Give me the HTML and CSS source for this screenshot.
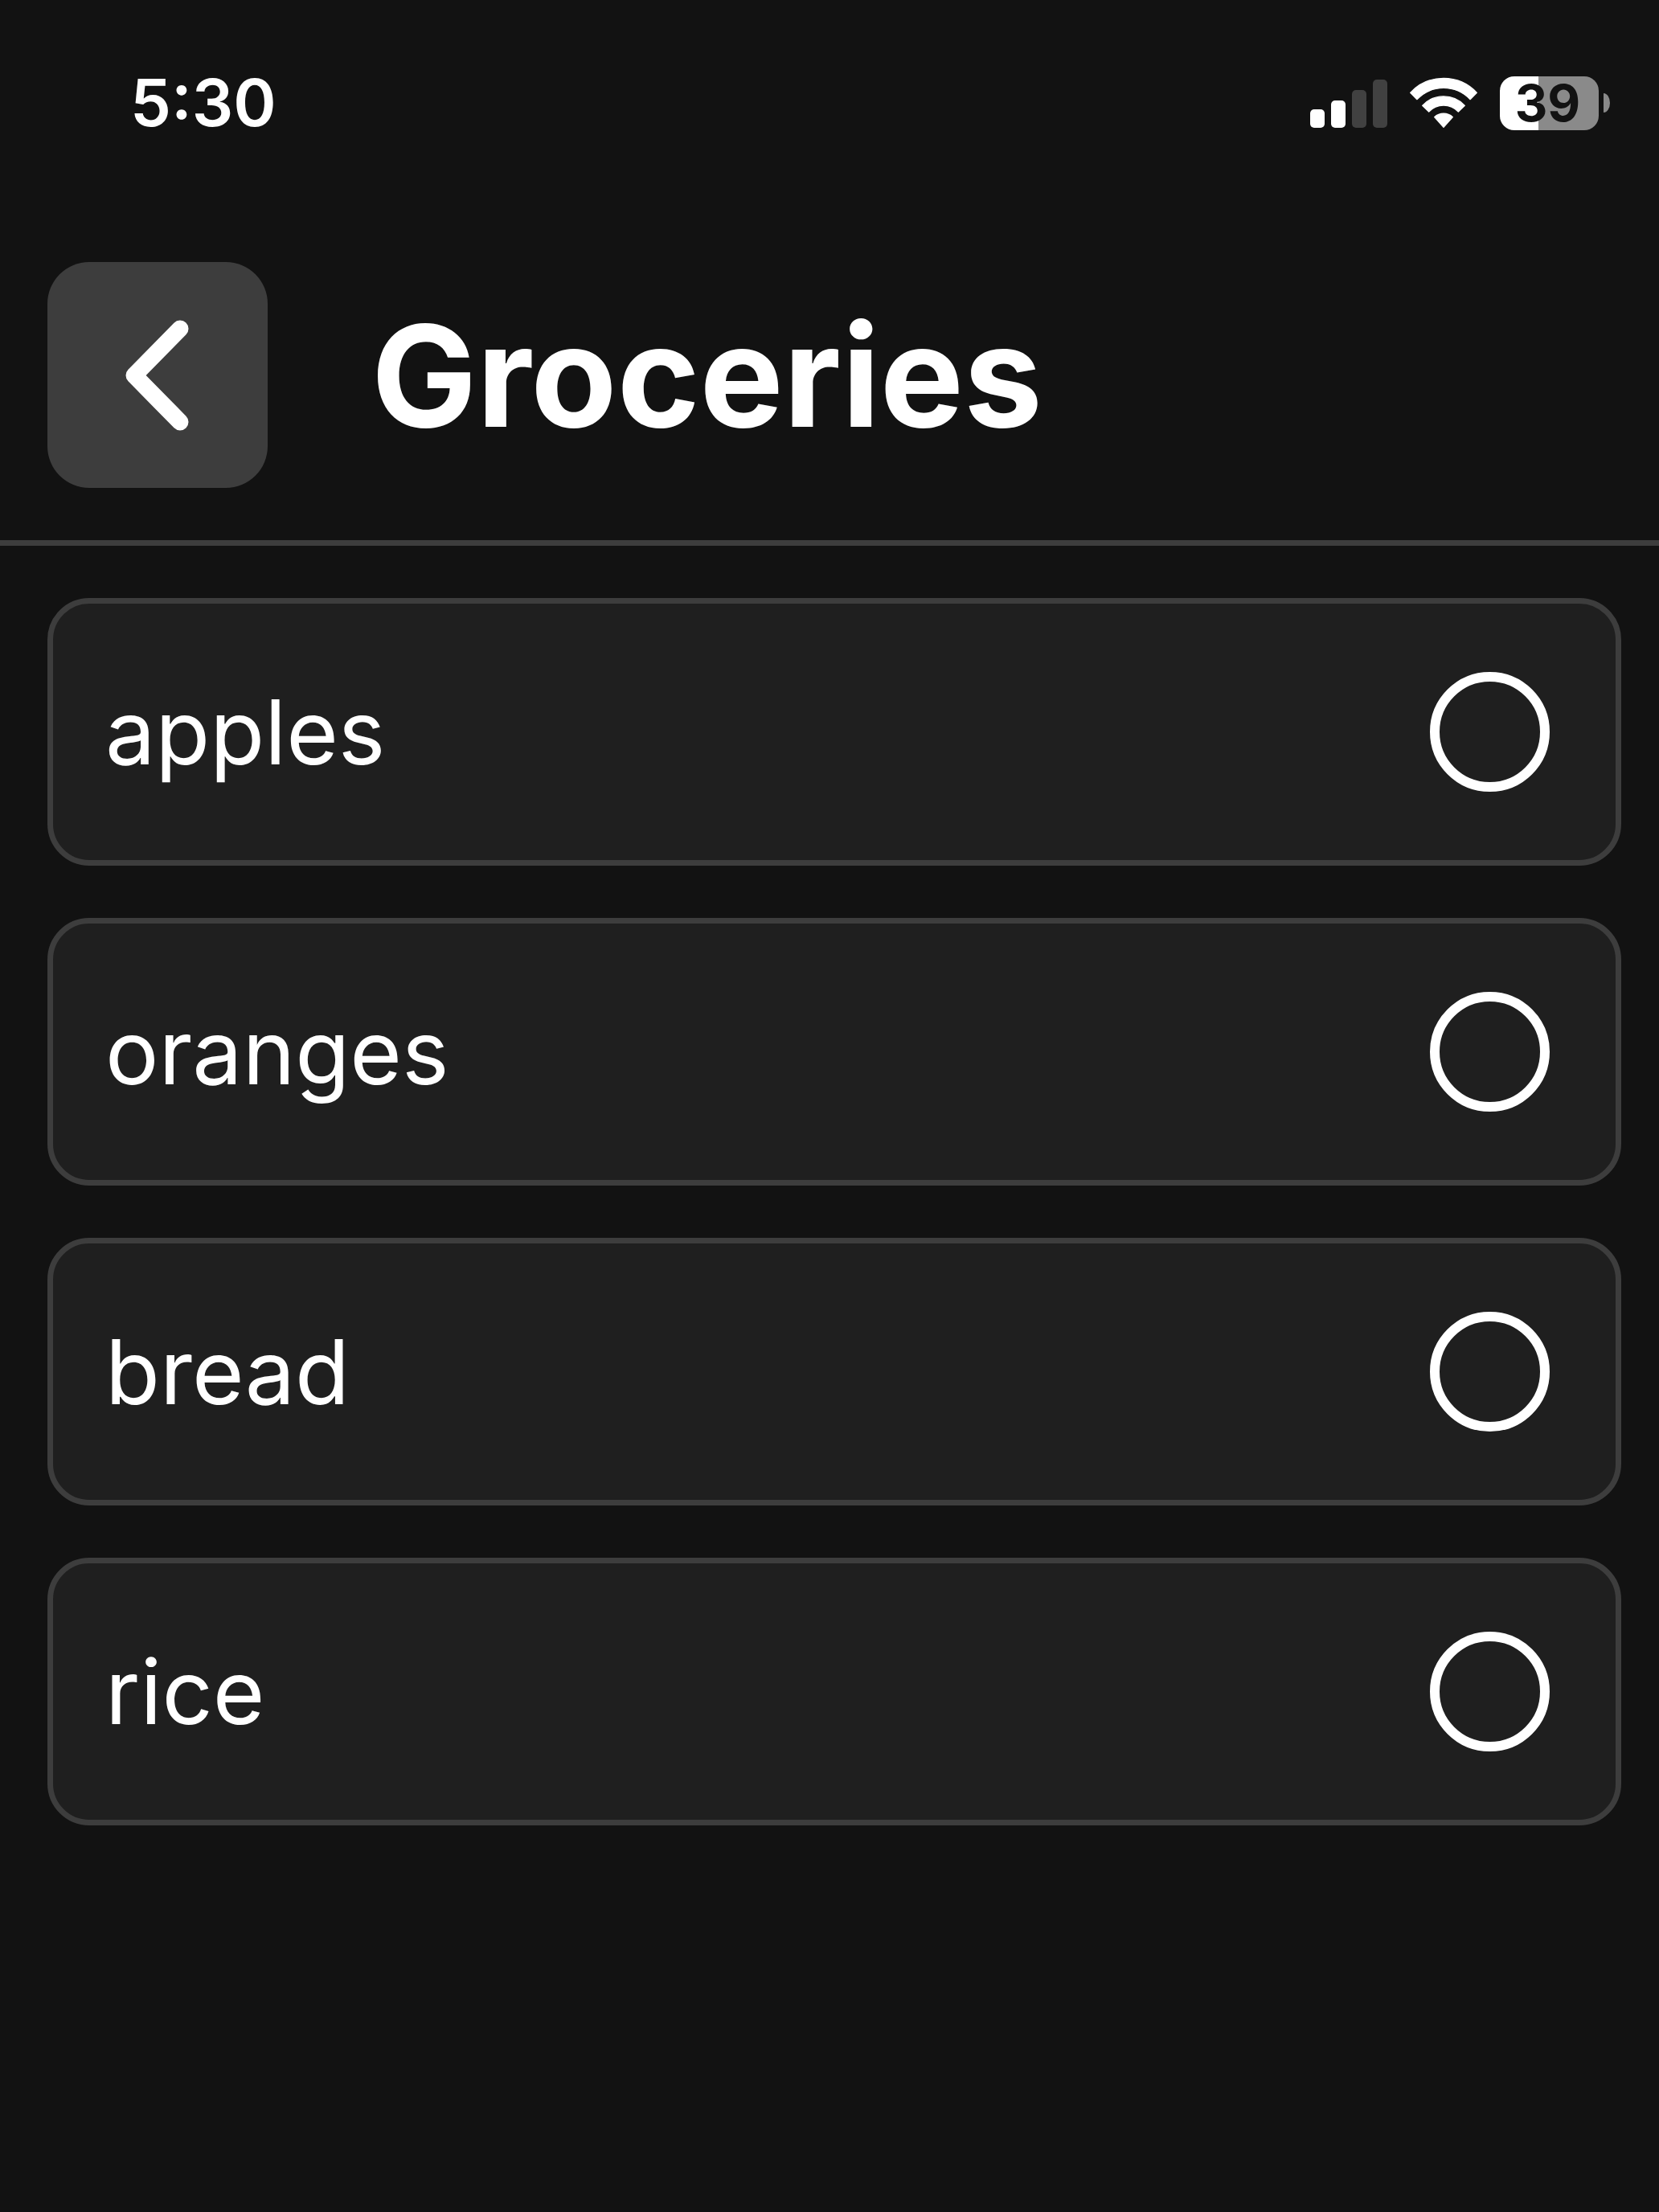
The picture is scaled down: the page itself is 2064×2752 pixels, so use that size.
FILE: index.html
```html
<!DOCTYPE html>
<html lang="en">
<head>
<meta charset="utf-8">
<meta name="viewport" content="width=device-width, initial-scale=1">
<title>Groceries</title>
<link rel="stylesheet" href="styles.css">
</head>
<body>
<div class="status-bar">
  <time class="clock">5:30</time>
  <div class="indicators">
    <svg class="signal" viewBox="0 0 96 62" aria-hidden="true">
      <rect x="0" y="39" width="18" height="23" rx="5"/>
      <rect x="26" y="28" width="18" height="34" rx="5"/>
      <rect class="dim" x="52" y="15" width="18" height="47" rx="5"/>
      <rect class="dim" x="78" y="2" width="18" height="60" rx="5"/>
    </svg>
    <svg class="wifi" viewBox="0 0 258 192" aria-hidden="true">
      <path d="M5 58A170 170 0 0 1 253 58L228 83A136 136 0 0 0 30 83Z"/>
      <path d="M50 106A108 108 0 0 1 208 106L184 129A75 75 0 0 0 74 129Z"/>
      <path d="M95 149A50 50 0 0 1 163 149L129 187Z"/>
    </svg>
    <div class="battery">
      <span class="battery-level">39</span>
      <span class="battery-cap"></span>
    </div>
  </div>
</div>
<header class="page-header">
  <button class="back" type="button" aria-label="Back">
    <svg class="chevron" viewBox="0 0 80 140" aria-hidden="true"><path d="M68 12L11 70L68 128"/></svg>
  </button>
  <h1 class="title">Groceries</h1>
</header>
<main>
  <ul class="list">
    <li><label class="item"><span>apples</span><input class="check" type="checkbox"></label></li>
    <li><label class="item"><span>oranges</span><input class="check" type="checkbox"></label></li>
    <li><label class="item"><span>bread</span><input class="check" type="checkbox"></label></li>
    <li><label class="item"><span>rice</span><input class="check" type="checkbox"></label></li>
  </ul>
</main>
</body>
</html>
```
FILE: styles.css
```css
* {
  box-sizing: border-box;
}

body {
  margin: 0;
  min-height: 100vh;
  background: #121212;
  color: #fff;
  font-family: Inter, "Liberation Sans", sans-serif;
}

.status-bar {
  display: flex;
  align-items: center;
  justify-content: space-between;
  padding: 88px 61px 0 162px;
}

.clock {
  font-size: 81px;
  font-weight: 600;
  line-height: 80px;
}

.indicators {
  display: flex;
  align-items: center;
  gap: 27px;
}

.signal {
  width: 96px;
  height: 62px;
  fill: #fff;
}

.signal .dim {
  fill: #414141;
}

.wifi {
  width: 86px;
  height: 64px;
  fill: #fff;
  stroke: #fff;
  stroke-width: 4;
  stroke-linejoin: round;
}

.battery {
  display: flex;
  align-items: center;
  gap: 6px;
}

.battery-level {
  width: 123px;
  padding-right: 4px;
  border-radius: 18px;
  background: linear-gradient(to right, #fff 39%, #8a8a8a 39%);
  color: #121212;
  font-size: 63px;
  font-weight: 700;
  line-height: 67px;
  text-align: center;
}

.battery-cap {
  width: 8px;
  height: 24px;
  border-radius: 0 8px 8px 0 / 0 12px 12px 0;
  background: #8a8a8a;
}

.page-header {
  display: flex;
  align-items: center;
  gap: 129px;
  padding: 158px 59px 65px;
  border-bottom: 7px solid #3d3d3d;
}

.back {
  display: flex;
  align-items: center;
  justify-content: center;
  width: 274px;
  height: 281px;
  padding: 0;
  border: 0;
  border-radius: 52px;
  background: #3d3d3d;
}

.chevron {
  width: 80px;
  height: 140px;
  fill: none;
  stroke: #fff;
  stroke-width: 21;
  stroke-linecap: round;
  stroke-linejoin: round;
}

.title {
  margin: 0;
  font-size: 175px;
  font-weight: 700;
  line-height: 216px;
}

.list {
  display: flex;
  flex-direction: column;
  gap: 65px;
  margin: 0;
  padding: 65px 47px 65px 59px;
  list-style: none;
}

.item {
  display: flex;
  align-items: center;
  justify-content: space-between;
  padding: 91px 82px 91px 65px;
  border: 7px solid #3d3d3d;
  border-radius: 52px;
  background: #1f1f1f;
  font-size: 111px;
  line-height: 137px;
}

.check {
  appearance: none;
  width: 149px;
  height: 149px;
  margin: -6px 0;
  border: 12px solid #fff;
  border-radius: 50%;
}

.check:checked {
  background: #fff;
  box-shadow: inset 0 0 0 12px #1f1f1f;
}
```
